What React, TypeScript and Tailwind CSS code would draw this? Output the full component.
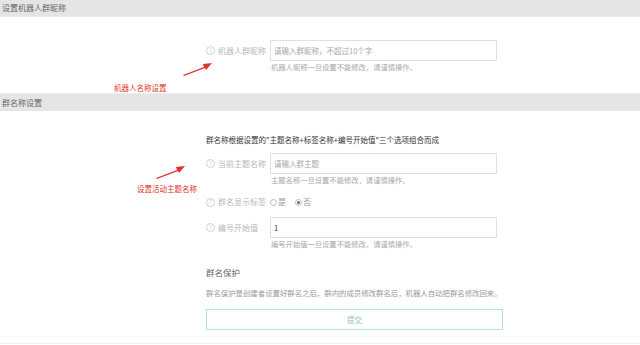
import React from 'react';

function HelpDot() {
    return (
        <span className="w-[9px] h-[9px] rounded-full border border-[#d0d0d0] text-[6px] leading-none text-[#c8c8c8] flex items-center justify-center mr-[3px]">?</span>
    );
}

function Field({ label, placeholder, value, help }: { label: string; placeholder?: string; value?: string; help: string }) {
    return (
        <div>
            <div className="flex items-center">
                <div className="w-[64px] flex items-center text-[8px] text-[#b8b8b8]">
                    <HelpDot />
                    <span>{label}</span>
                </div>
                <div className="w-[227px] h-[21px] border border-[#e0e0e0] flex items-center px-[3px] text-[7.5px]">
                    {value ? <span className="text-[#333]">{value}</span> : <span className="text-[#a8a8a8]">{placeholder}</span>}
                </div>
            </div>
            <p className="pl-[65px] mt-[1px] text-[7.3px] text-[#a8a8a8] leading-[10px]">{help}</p>
        </div>
    );
}

function RedArrow() {
    return (
        <svg width="32" height="16" viewBox="0 0 32 16">
            <polygon points="1,14 22,6 21,3 30,2 24,9 23,7 2,15" fill="#e0312a" />
        </svg>
    );
}

export default function App() {
    return (
        <div className="relative w-[640px] h-[345px] bg-white overflow-hidden font-['Noto_Sans_CJK_SC',sans-serif]">
            {/* Section 1 header */}
            <div className="h-[17px] bg-[#e5e5e5] border-b border-[#ededed] px-[2px] flex items-center text-[8px] text-[#666]">
                设置机器人群昵称
            </div>

            <div className="h-[76px] pt-[23px] pl-[206px]">
                <Field label="机器人群昵称" placeholder="请输入群昵称，不超过10个字" help="机器人昵称一旦设置不能修改，请谨慎操作。" />
            </div>

            {/* Section 2 header */}
            <div className="h-[18px] bg-[#e5e5e5] border-t border-[#ededed] px-[2px] flex items-center text-[8px] text-[#666]">
                群名称设置
            </div>

            <div className="pl-[206px] pt-[24px]">
                <p className="text-[7.5px] text-[#333] leading-[10px]">群名称根据设置的"主题名称+标签名称+编号开始值"三个选项组合而成</p>

                <div className="mt-[8px]">
                    <Field label="当前主题名称" placeholder="请输入群主题" help="主题名称一旦设置不能修改，请谨慎操作。" />
                </div>

                <div className="mt-[12px] flex items-center text-[8px] text-[#b8b8b8] h-[10px]">
                    <div className="w-[64px] flex items-center">
                        <HelpDot />
                        <span>群名显示标签</span>
                    </div>
                    <span className="w-[7px] h-[7px] rounded-full border border-[#bbb] mr-[1px]"></span>
                    <span className="text-[#999]">是</span>
                    <span className="ml-[9px] w-[7px] h-[7px] rounded-full border border-[#bbb] mr-[1px] flex items-center justify-center">
                        <span className="w-[3px] h-[3px] rounded-full bg-[#666]"></span>
                    </span>
                    <span className="text-[#999]">否</span>
                </div>

                <div className="mt-[10px]">
                    <Field label="编号开始值" value="1" help="编号开始值一旦设置不能修改，请谨慎操作。" />
                </div>

                <p className="mt-[17px] text-[8.5px] text-[#666] leading-[12px]">群名保护</p>
                <p className="mt-[10px] text-[7.4px] text-[#999] leading-[10px]">群名保护是创建者设置好群名之后，群内的成员修改群名后，机器人自动把群名修改回来。</p>

                <button className="mt-[11px] w-[297px] h-[21px] border border-[#b8e2d8] text-[7.5px] text-[#8fc9bb] flex items-center justify-center">
                    提交
                </button>
            </div>

            <div className="absolute left-0 right-0 top-[343px] h-px bg-[#f0f0f0]"></div>

            {/* annotations */}
            <div className="absolute left-[182px] top-[61px]"><RedArrow /></div>
            <div className="absolute left-[114px] top-[82px] text-[7.5px] text-[#e0332b]">机器人名称设置</div>
            <div className="absolute left-[155px] top-[164px]"><RedArrow /></div>
            <div className="absolute left-[137px] top-[183px] text-[7.5px] text-[#e0332b]">设置活动主题名称</div>
        </div>
    );
}
